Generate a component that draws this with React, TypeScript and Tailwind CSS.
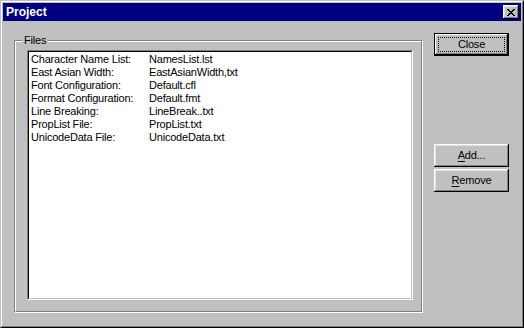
import React from "react";

const raised =
  "shadow-[inset_-1px_-1px_0_#000,inset_1px_1px_0_#fff,inset_-2px_-2px_0_#808080,inset_2px_2px_0_#dfdfdf]";

function Btn({ children, isDefault }: { children: React.ReactNode; isDefault?: boolean }) {
  if (isDefault) {
    return (
      <div className="w-[75px] h-[23px] border border-black bg-[#c0c0c0]">
        <div className="w-full h-full p-[3px] shadow-[inset_-1px_-1px_0_#000,inset_1px_1px_0_#fff,inset_-2px_-2px_0_#808080]">
          <div className="w-full h-full border border-dotted border-black flex items-center justify-center leading-none">
            {children}
          </div>
        </div>
      </div>
    );
  }
  return (
    <div className={`w-[75px] h-[23px] bg-[#c0c0c0] flex items-center justify-center leading-none ${raised}`}>
      {children}
    </div>
  );
}

const rows: [string, string][] = [
  ["Character Name List:", "NamesList.lst"],
  ["East Asian Width:", "EastAsianWidth,txt"],
  ["Font Configuration:", "Default.cfl"],
  ["Format Configuration:", "Default.fmt"],
  ["Line Breaking:", "LineBreak..txt"],
  ["PropList File:", "PropList.txt"],
  ["UnicodeData File:", "UnicodeData.txt"],
];

export default function App() {
  return (
    <div
      className="w-[524px] h-[328px] bg-[#c0c0c0] border border-t-[#c0c0c0] border-l-[#c0c0c0] border-r-black border-b-black text-[11px] text-black tracking-[-0.2px]"
      style={{ fontFamily: '"Liberation Sans", Arial, sans-serif' }}
    >
      <div className="w-full h-full border border-t-white border-l-white border-r-[#808080] border-b-[#808080] p-px flex flex-col">
        <div className="h-[18px] bg-[#000080] flex items-center justify-between pl-[3px] pr-[2px]">
          <span className="text-white font-bold text-[12px] tracking-normal leading-none">Project</span>
          <div className={`w-[16px] h-[14px] bg-[#c0c0c0] flex items-center justify-center ${raised}`}>
            <svg width="8" height="7" viewBox="0 0 8 7" shapeRendering="crispEdges">
              <path
                d="M0 0h2v1h-2zM6 0h2v1h-2zM1 1h2v1h-2zM5 1h2v1h-2zM2 2h4v1h-4zM3 3h2v1h-2zM2 4h4v1h-4zM1 5h2v1h-2zM5 5h2v1h-2zM0 6h2v1h-2zM6 6h2v1h-2z"
                fill="#000"
              />
            </svg>
          </div>
        </div>
        <div className="flex-1 flex items-start pl-[11px]">
          <div className="relative mt-[19px] w-[409px] h-[273px] border border-t-[#808080] border-l-[#808080] border-r-white border-b-white">
            <div className="w-full h-full border border-t-white border-l-white border-r-[#808080] border-b-[#808080] pl-[11px] pt-[8px] pr-[8px] pb-[11px]">
              <div className="w-full h-full border border-t-[#808080] border-l-[#808080] border-r-white border-b-white">
                <div className="w-full h-full bg-white border border-t-black border-l-black border-r-[#c0c0c0] border-b-[#c0c0c0] pl-[2px] pt-[1px]">
                  {rows.map(([a, b]) => (
                    <div key={a} className="flex h-[13px] items-center leading-none">
                      <span className="w-[118px]">{a}</span>
                      <span>{b}</span>
                    </div>
                  ))}
                </div>
              </div>
            </div>
            <span className="absolute left-[7px] top-[-8px] bg-[#c0c0c0] px-[2px] leading-[14px]">Files</span>
          </div>
          <div className="flex flex-col ml-[11px] mt-[12px]">
            <Btn isDefault>Close</Btn>
            <div className="h-[88px]" />
            <Btn>
              <span>
                <span className="underline underline-offset-2">A</span>dd...
              </span>
            </Btn>
            <div className="h-[2px]" />
            <Btn>
              <span>
                <span className="underline underline-offset-2">R</span>emove
              </span>
            </Btn>
          </div>
        </div>
      </div>
    </div>
  );
}
